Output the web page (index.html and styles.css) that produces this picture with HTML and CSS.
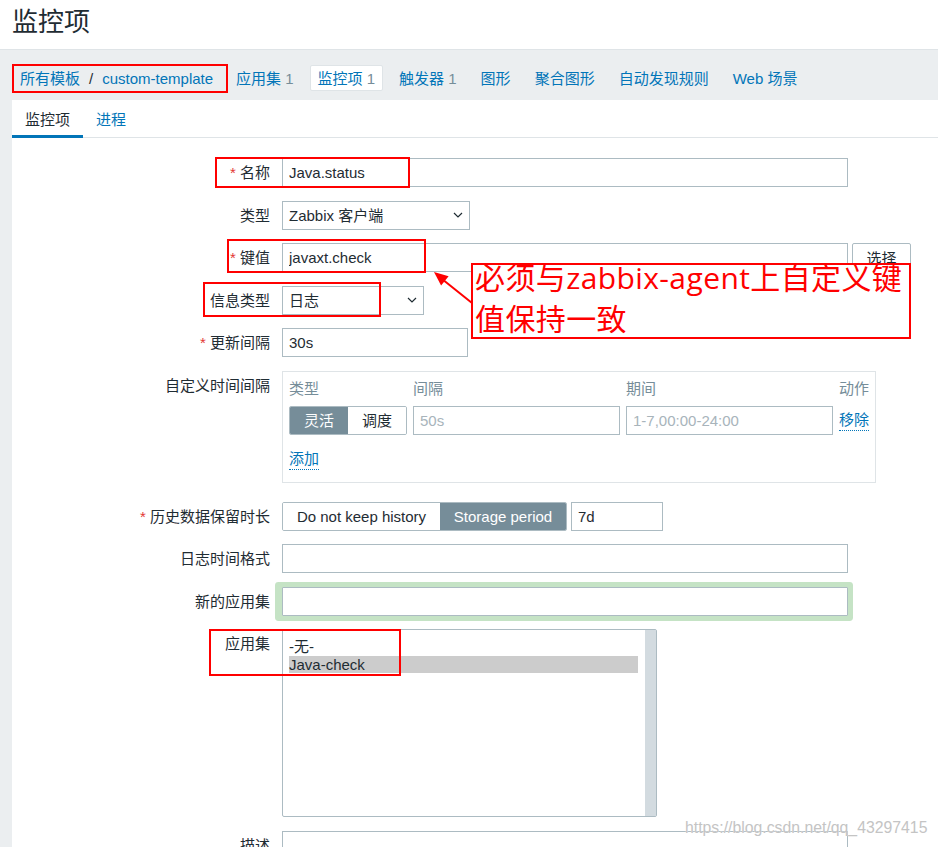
FILE: index.html
```html
<!DOCTYPE html>
<html lang="zh-CN">
<head>
<meta charset="utf-8">
<title>监控项</title>
<link rel="stylesheet" href="styles.css">
</head>
<body>
<header class="page-header"><h1 class="page-title">监控项</h1></header>

<nav class="nav-strip">
  <div class="breadcrumb"><a class="link">所有模板</a><span class="sep">/</span><a class="link">custom-template</a></div>
  <a class="nav-item">应用集 <span class="count">1</span></a>
  <a class="nav-item active">监控项 <span class="count">1</span></a>
  <a class="nav-item">触发器 <span class="count">1</span></a>
  <a class="nav-item">图形</a>
  <a class="nav-item">聚合图形</a>
  <a class="nav-item">自动发现规则</a>
  <a class="nav-item">Web 场景</a>
</nav>

<section class="panel">
  <div class="tabs">
    <span class="tab selected">监控项</span>
    <span class="tab">进程</span>
  </div>

  <div class="form">
    <div class="row">
      <div class="label"><span class="req">*</span> 名称</div>
      <input class="input w-long" value="Java.status">
    </div>

    <div class="row">
      <div class="label">类型</div>
      <div class="input select w-type"><span>Zabbix 客户端</span><svg class="chev" width="10" height="6" viewBox="0 0 10 6"><path d="M1 1 L5 5 L9 1" fill="none" stroke="#1f2c33" stroke-width="1.2"/></svg></div>
    </div>

    <div class="row">
      <div class="label"><span class="req">*</span> 键值</div>
      <input class="input w-long" value="javaxt.check">
      <button class="btn" type="button">选择</button>
    </div>

    <div class="row">
      <div class="label">信息类型</div>
      <div class="input select w-info"><span>日志</span><svg class="chev" width="10" height="6" viewBox="0 0 10 6"><path d="M1 1 L5 5 L9 1" fill="none" stroke="#1f2c33" stroke-width="1.2"/></svg></div>
    </div>

    <div class="row">
      <div class="label"><span class="req">*</span> 更新间隔</div>
      <input class="input w-short" value="30s">
    </div>

    <div class="row row-intervals">
      <div class="label">自定义时间间隔</div>
      <div class="intervals">
        <div class="int-grid">
          <div class="int-head">类型</div>
          <div class="int-head">间隔</div>
          <div class="int-head">期间</div>
          <div class="int-head">动作</div>
          <div class="toggle small">
            <span class="seg on">灵活</span><span class="seg">调度</span>
          </div>
          <input class="input" placeholder="50s">
          <input class="input" placeholder="1-7,00:00-24:00">
          <div class="int-action"><a class="dlink">移除</a></div>
        </div>
        <a class="dlink add">添加</a>
      </div>
    </div>

    <div class="row">
      <div class="label"><span class="req">*</span> 历史数据保留时长</div>
      <div class="toggle hist">
        <span class="seg seg-a">Do not keep history</span><span class="seg seg-b on">Storage period</span>
      </div>
      <input class="input w-days" value="7d">
    </div>

    <div class="row">
      <div class="label">日志时间格式</div>
      <input class="input w-long">
    </div>

    <div class="row">
      <div class="label">新的应用集</div>
      <input class="input w-long glow">
    </div>

    <div class="row">
      <div class="label">应用集</div>
      <div class="listbox">
        <div class="list-items">
          <div class="opt">-无-</div>
          <div class="opt picked">Java-check</div>
        </div>
        <div class="scrollbar"></div>
      </div>
    </div>

    <div class="row">
      <div class="label">描述</div>
      <div class="input w-long textarea"></div>
    </div>
  </div>
</section>

<div class="mark mark-crumb"></div>
<div class="mark mark-name"></div>
<div class="mark mark-key"></div>
<div class="mark mark-info"></div>
<div class="mark mark-apps"></div>

<svg class="arrow" width="60" height="50" viewBox="0 0 60 50">
  <line x1="52" y1="43" x2="22" y2="19" stroke="#ff0000" stroke-width="2"/>
  <polygon points="14,12 28.6,16.2 21.1,25.5" fill="#ff0000"/>
</svg>
<div class="note"><div class="note-text">必须与zabbix-agent上自定义键<br>值保持一致</div></div>

<div class="watermark">https://blog.csdn.net/qq_43297415</div>
</body>
</html>
```

FILE: styles.css
```css
html, body {
  margin: 0;
  height: 847px;
  overflow: hidden;
}
body {
  font-family: "Liberation Sans", "Noto Sans CJK SC", sans-serif;
  font-size: 15px;
  color: #1f2c33;
  background: #ebeef0;
  position: relative;
}
a { cursor: pointer; }

.page-header {
  background: #fff;
  height: 50px;
  box-sizing: border-box;
  border-bottom: 1px solid #dfe4e7;
}
.page-title {
  margin: 0;
  padding-left: 12px;
  font-size: 26px;
  font-weight: normal;
  line-height: 45px;
  color: #1f2c33;
}

.nav-strip {
  display: flex;
  align-items: flex-start;
  height: 50px;
  box-sizing: border-box;
  padding: 15px 0 0 12px;
}
.breadcrumb {
  display: flex;
  height: 26px;
  line-height: 27px;
  padding: 0 15px 0 8px;
}
.sep { margin: 0 9px; color: #1f2c33; }
.link { color: #0275b8; }
.nav-item {
  color: #0275b8;
  height: 26px;
  line-height: 25px;
  padding: 0 7px;
  margin-left: 8px;
  border: 1px solid transparent;
  border-radius: 2px;
  box-sizing: border-box;
  white-space: nowrap;
}
.breadcrumb + .nav-item { margin-left: 0; }
.nav-item.active { background: #fff; border-color: #dfe4e7; }
.count { color: #768d99; }

.panel {
  margin-left: 12px;
  background: #fff;
  height: 760px;
}
.tabs {
  display: flex;
  height: 38px;
  box-sizing: border-box;
  border-bottom: 1px solid #dfe4e7;
}
.tab {
  height: 38px;
  box-sizing: border-box;
  padding: 4px 13px 0;
  line-height: 31px;
  border-bottom: 3px solid transparent;
  color: #0275b8;
}
.tab.selected { color: #1f2c33; border-bottom-color: #0275b8; }

.form { padding-top: 20px; }
.row {
  display: flex;
  align-items: flex-start;
  margin-bottom: 13.5px;
}
.row-intervals { margin-bottom: 18.5px; }
.label {
  width: 270px;
  box-sizing: border-box;
  padding-right: 12px;
  text-align: right;
  line-height: 29px;
  flex: none;
}
.req { color: #e33734; }

.input {
  height: 29px;
  box-sizing: border-box;
  border: 1px solid #acbbc2;
  padding: 0 6px;
  font: inherit;
  color: #1f2c33;
  background: #fff;
  margin: 0;
  outline: none;
}
.input::placeholder { color: #a8b4bb; }
.w-long { width: 566px; }
.w-type { width: 188px; }
.w-info { width: 142px; }
.w-short { width: 186px; }
.w-days { width: 92px; margin-left: 4px; }

.select {
  display: flex;
  align-items: center;
  justify-content: space-between;
  line-height: 27px;
  padding-right: 6px;
}
.chev { flex: none; }

.btn {
  margin-left: 4px;
  width: 59px;
  height: 29px;
  border: 1px solid #acbbc2;
  border-radius: 2px;
  background: #fff;
  font: inherit;
  color: #1f2c33;
  padding: 0;
}

.intervals {
  width: 594px;
  height: 112.5px;
  box-sizing: border-box;
  border: 1px solid #dfe4e7;
  padding: 5px 6px 0;
}
.int-grid {
  display: grid;
  grid-template-columns: 118px 207px 207px auto;
  column-gap: 6px;
  row-gap: 5px;
}
.int-head {
  color: #768d99;
  line-height: 24px;
}
.int-grid .input { width: 100%; }
.int-action { display: flex; align-items: center; }
.dlink {
  display: inline-block;
  color: #0275b8;
  line-height: 20px;
  border-bottom: 1px dotted #0275b8;
}
.add { margin-top: 14px; }

.toggle {
  display: flex;
  height: 29px;
  box-sizing: border-box;
  border: 1px solid #acbbc2;
  border-radius: 2px;
  overflow: hidden;
}
.seg {
  line-height: 27px;
  text-align: center;
  color: #1f2c33;
  background: #fff;
}
.seg.on { background: #768d99; color: #fff; }
.toggle.small .seg { width: 58px; }
.seg-a { width: 157px; }
.seg-b { width: 126px; }

.glow {
  box-shadow: 0 0 0 5px #c5e3c5, -2px 0 0 5px #c5e3c5;
  border-radius: 1px;
}

.listbox {
  display: flex;
  width: 375px;
  height: 188px;
  box-sizing: border-box;
  border: 1px solid #acbbc2;
  border-radius: 2px;
}
.list-items {
  flex: 1;
  padding: 8px 7px 0 6px;
}
.opt { line-height: 17.5px; }
.opt.picked { background: #cccccc; }
.scrollbar {
  width: 11px;
  background: #d3dbe0;
}
.textarea { height: 60px; }

.mark {
  position: absolute;
  border: 2px solid #ff0000;
  box-sizing: border-box;
}
.mark-crumb { left: 12px; top: 64px; width: 216px; height: 29px; }
.mark-name { left: 215px; top: 157px; width: 195px; height: 31px; }
.mark-key { left: 227px; top: 239px; width: 199px; height: 34px; }
.mark-info { left: 203px; top: 282px; width: 178px; height: 35px; }
.mark-apps { left: 209px; top: 629px; width: 192px; height: 47px; }

.arrow {
  position: absolute;
  left: 420px;
  top: 260px;
}
.note {
  position: absolute;
  left: 471px;
  top: 263px;
  width: 440px;
  height: 76px;
  box-sizing: border-box;
  border: 2px solid #ff0000;
  background: #fff;
  color: #ff0000;
  font-family: "Open Sans", "Noto Sans CJK SC", sans-serif;
  font-size: 30px;
  line-height: 41px;
  padding: 0 0 0 2px;
  white-space: nowrap;
  letter-spacing: 0.4px;
}
.note-text { margin-top: -8px; }

.watermark {
  position: absolute;
  left: 685px;
  top: 818px;
  font-size: 15.8px;
  line-height: 20px;
  color: #c4c4c4;
  text-shadow: 0 0 1px #fff;
}
```
